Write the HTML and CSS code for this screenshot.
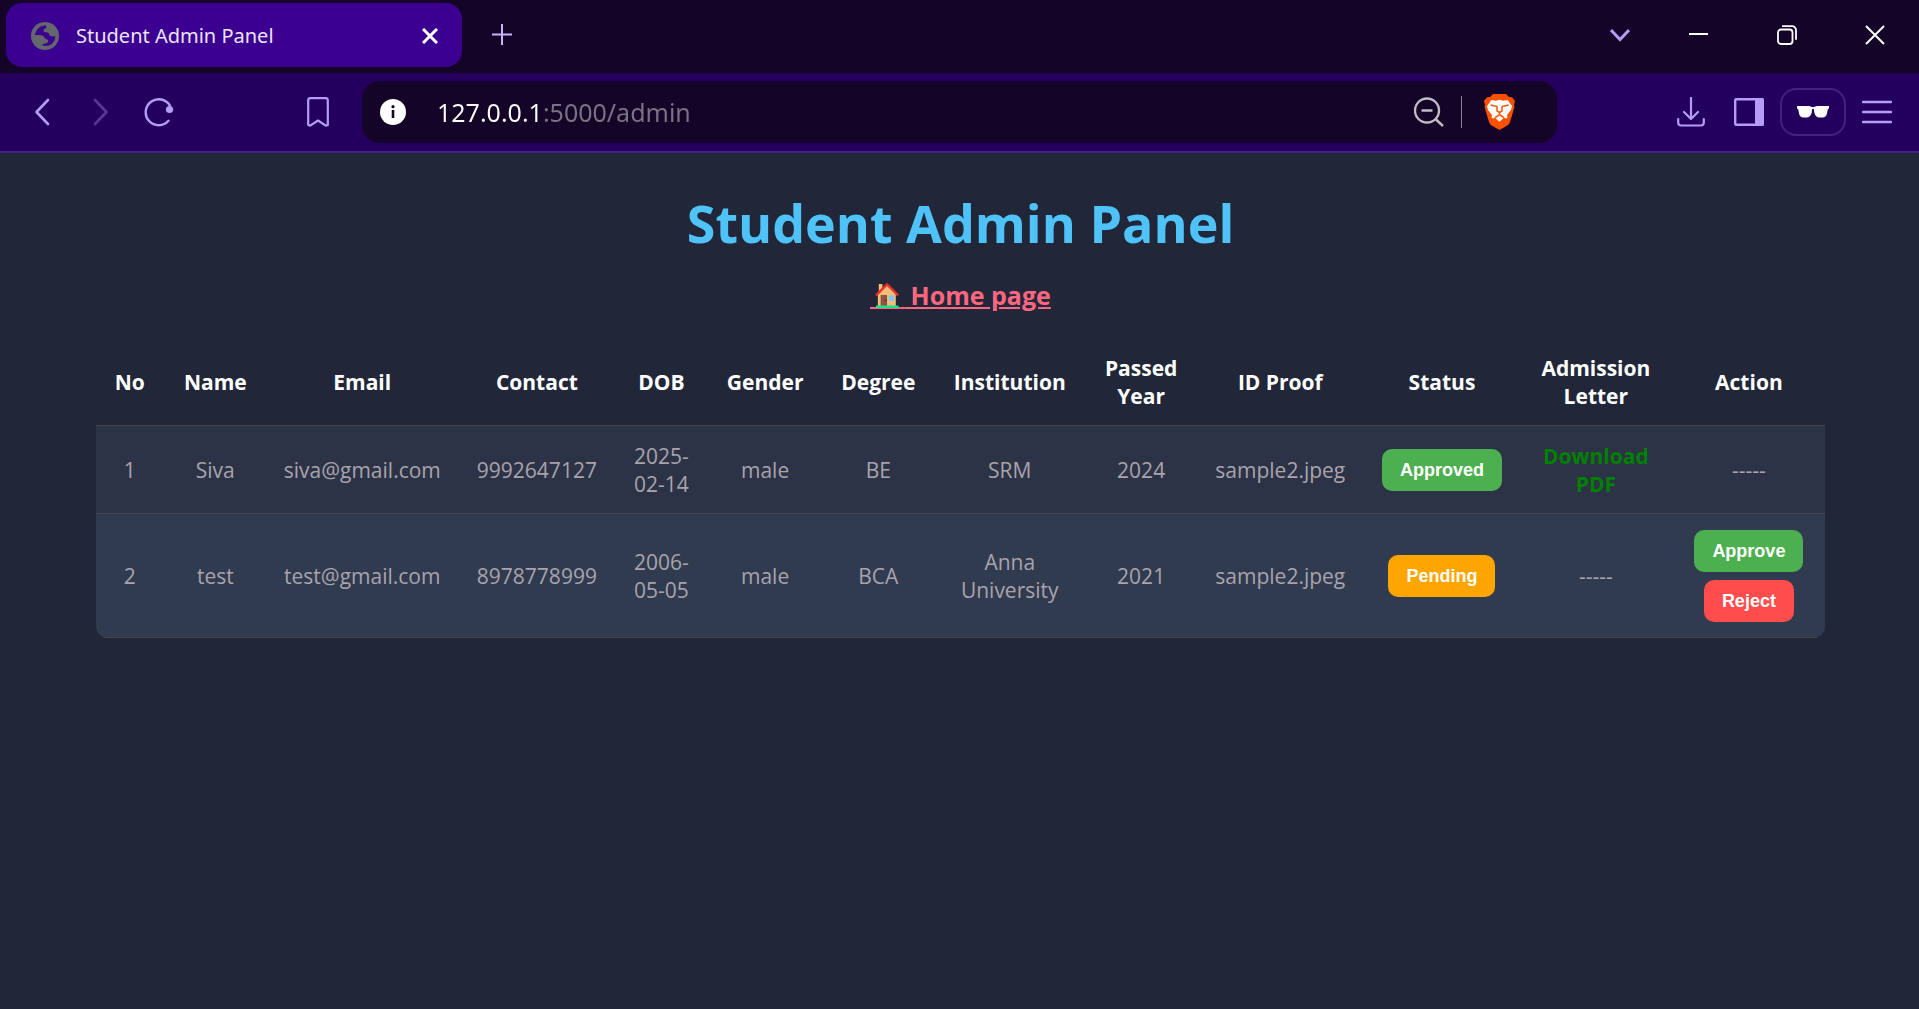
FILE: index.html
```html
<!DOCTYPE html>
<html lang="en">
<head>
<meta charset="utf-8">
<meta name="viewport" content="width=device-width, initial-scale=1">
<title>Student Admin Panel</title>
<link rel="stylesheet" href="styles.css">
</head>
<body>
<header class="browser">
  <div class="tab-strip">
    <div class="tab">
      <svg class="globe" width="28" height="28" viewBox="0 0 28 28" aria-hidden="true"><circle cx="14" cy="14" r="14" fill="#64686c"/><path d="M15 3.500C9 3 5 7.500 4 13c3 .2 6-.2 8 1 2 1.200 2 3.500 4 3.500 1.500.3 1.500 2 .5 3-1.500 1.500-4 .5-5.500 2.500 4 2.500 9 .5 11.500-3 1.500-2 1.800-4 1.800-6-1.800.3-3.800 1-5.300-.5-1.200-1.300-.6-2.500-2.500-3-2-.3-4 0-4-2s2.500-1.500 2.800-3z" fill="#3b0090"/></svg>
      <span class="tab-title">Student Admin Panel</span>
      <button class="icon-button" aria-label="Close tab"><svg width="16" height="16" viewBox="0 0 16 16" fill="none" stroke="#fff" stroke-width="3"><path d="M1 1l14 14M15 1L1 15"/></svg></button>
    </div>
    <button class="icon-button new-tab" aria-label="New tab"><svg width="22" height="22" viewBox="0 0 22 22" fill="none" stroke="#c6b4f4" stroke-width="2"><path d="M11 0v21M1 10.500h20"/></svg></button>
    <div class="window-controls">
      <button class="icon-button" aria-label="Search tabs"><svg width="20" height="14" viewBox="0 0 20 14" fill="none" stroke="#b39af8" stroke-width="3"><path d="M1 2l9 9.500L19 2"/></svg></button>
      <button class="icon-button" aria-label="Minimize"><svg width="20" height="20" viewBox="0 0 20 20" fill="none" stroke="#fff" stroke-width="2"><path d="M0 9h19"/></svg></button>
      <button class="icon-button" aria-label="Restore"><svg width="20" height="20" viewBox="0 0 20 20" fill="none" stroke="#fff" stroke-width="1.800"><rect x="1" y="4.500" width="14.500" height="14.500" rx="3"/><path d="M5 1.200h10a4 4 0 0 1 4 4v9.500"/></svg></button>
      <button class="icon-button" aria-label="Close"><svg width="20" height="20" viewBox="0 0 20 20" fill="none" stroke="#fff" stroke-width="2"><path d="M1 1l18 18M19 1L1 19"/></svg></button>
    </div>
  </div>
  <div class="toolbar">
    <div class="navigation">
      <button class="icon-button" aria-label="Back"><svg width="16" height="28" viewBox="0 0 16 28" fill="none" stroke="#b69cf9" stroke-width="2.600" stroke-linecap="round" stroke-linejoin="round"><path d="M14 2L2.500 14 14 26"/></svg></button>
      <button class="icon-button forward" aria-label="Forward"><svg width="16" height="28" viewBox="0 0 16 28" fill="none" stroke="#5e3596" stroke-width="2.600" stroke-linecap="round" stroke-linejoin="round"><path d="M2 2l11.500 12L2 26"/></svg></button>
      <button class="icon-button reload" aria-label="Reload"><svg width="30" height="30" viewBox="0 0 30 30" fill="none" stroke="#b69cf9" stroke-width="2.400" stroke-linecap="round"><path d="M24.500 23.800A13 13 0 1 1 26 8.800"/><circle cx="25.500" cy="12.500" r="3.600" fill="#b69cf9" stroke="none"/></svg></button>
      <button class="icon-button" aria-label="Bookmark"><svg width="22" height="30" viewBox="0 0 22 30" fill="none" stroke="#b69cf9" stroke-width="2.200" stroke-linejoin="round"><path d="M1.200 3.500A2.300 2.300 0 0 1 3.500 1.200h15a2.300 2.300 0 0 1 2.300 2.300V28l-2 .6L11 23.500 3.200 28.600l-2-.6z"/></svg></button>
    </div>
    <div class="address-bar">
      <svg class="info" width="26" height="26" viewBox="0 0 26 26" aria-hidden="true"><circle cx="13" cy="13" r="13" fill="#fff"/><path d="M13 11v8" stroke="#160427" stroke-width="2.600"/><circle cx="13" cy="7.700" r="1.600" fill="#160427"/></svg>
      <input class="address" type="text" aria-label="Address" value="127.0.0.1:5000/admin" spellcheck="false">
      <button class="icon-button" aria-label="Zoom out"><svg width="30" height="30" viewBox="0 0 30 30" fill="none" stroke="#c0bac2" stroke-width="2.400"><circle cx="13" cy="13.500" r="12"/><path d="M7.500 13.500h11M21.500 22l7.500 7"/></svg></button>
      <span class="divider"></span>
      <button class="icon-button" aria-label="Brave Shields"><svg width="31" height="36" viewBox="0 0 31 36"><path d="M9 0h13l3 3 3 .2L31 7l-1 4 .5 2-4.500 15c-.7 2-2 3-3.500 4L15.500 36 8.500 32C7 31 5.700 30 5 28L.5 13l.5-2L0 7l3-3.800L6 3z" fill="#ff5000"/><path d="M7.500 6l4.500.8 3.500-1 3.500 1 4.500-.8L28 12l-1 4-4 5 .5 2.500-1.500 1-4-1.800-2.500-1-2.500 1-4 1.800-1.500-1L8 21l-4-5-1-4z" fill="#fff"/><path d="M6.500 11l4 1 2.500.2M24.500 11l-4 1-2.500.2M13 12.200v4.600l2.500 1.800 2.500-1.800v-4.600M15.500 18.600v2M15.500 20.500l-4.500 3M15.500 20.500l4.500 3" fill="none" stroke="#ff5000" stroke-width="1.500"/><path d="M11.500 24.200l4-2.200 4 2.200-4 3.600z" fill="#fff"/></svg></button>
    </div>
    <div class="tools">
      <button class="icon-button" aria-label="Downloads"><svg width="28" height="30" viewBox="0 0 28 30" fill="none" stroke="#b69cf9" stroke-width="2.200" stroke-linecap="round" stroke-linejoin="round"><path d="M14 1v21M7 15l7 7 7-7M1.200 22v3.500a3 3 0 0 0 3 3h19.600a3 3 0 0 0 3-3V22"/></svg></button>
      <button class="icon-button" aria-label="Side panel"><svg width="30" height="28" viewBox="0 0 30 28"><rect x="1.200" y="1.200" width="27" height="25.600" rx="1" fill="none" stroke="#b69cf9" stroke-width="2.400"/><path d="M21 0h7.500A1.500 1.500 0 0 1 30 1.500v25a1.500 1.500 0 0 1-1.500 1.500H21z" fill="#b69cf9"/></svg></button>
      <button class="icon-button private" aria-label="Private window"><svg width="32" height="12" viewBox="0 0 32 12" fill="#fff"><path d="M0 0h12l4 1.200L20 0h12v2.500l-1.200.8-1 5c-.5 2-2 3.200-4 3.200h-3.300c-2.500 0-4.500-1.500-5.200-5L16.800 3h-1.600l-.5 3.500c-.7 3.500-2.700 5-5.200 5H6.200c-2 0-3.500-1.200-4-3.200l-1-5L0 2.500z"/></svg></button>
      <button class="icon-button" aria-label="Menu"><svg width="30" height="24" viewBox="0 0 30 24" fill="none" stroke="#b69cf9" stroke-width="2.400" stroke-linecap="round"><path d="M1 2h28M1 12h28M1 22h28"/></svg></button>
    </div>
  </div>
</header>
<main class="page">
  <h1>Student Admin Panel</h1>
  <a class="home-link" href="#"><svg class="house" width="34" height="28" viewBox="0 0 34 28" aria-hidden="true"><path d="M0 26h34v2H0z" fill="#ff6680"/><g transform="translate(.5 2) scale(.92)"><path d="M9 1h4v11H9zM8 12L18 2l9.500 10v13H8z" fill="#efbf78"/><path d="M6 13.500L18 1.500l12 12" fill="none" stroke="#ef2d2d" stroke-width="2.600"/><path d="M11 13h7v12h-7z" fill="#8c5543"/><circle cx="16.500" cy="19" r="1" fill="#5b3026"/><path d="M20 13.500h5.500v6H20z" fill="#82c8ff"/><path d="M6 24.500h24.500V27H6z" fill="#00ee8b"/></g></svg> Home page</a>
  <table class="students">
    <colgroup>
      <col class="col-no"><col class="col-name"><col class="col-email"><col class="col-contact"><col class="col-dob"><col class="col-gender"><col class="col-degree"><col class="col-institution"><col class="col-year"><col class="col-proof"><col class="col-status"><col class="col-letter"><col class="col-action">
    </colgroup>
    <thead>
      <tr><th>No</th><th>Name</th><th>Email</th><th>Contact</th><th>DOB</th><th>Gender</th><th>Degree</th><th>Institution</th><th>Passed Year</th><th>ID Proof</th><th>Status</th><th>Admission Letter</th><th>Action</th></tr>
    </thead>
    <tbody>
      <tr><td>1</td><td>Siva</td><td>siva@gmail.com</td><td>9992647127</td><td>2025-02-14</td><td>male</td><td>BE</td><td>SRM</td><td>2024</td><td>sample2.jpeg</td><td><button class="pill approve">Approved</button></td><td><a class="download" href="#">Download PDF</a></td><td>-----</td></tr>
      <tr><td>2</td><td>test</td><td>test@gmail.com</td><td>8978778999</td><td>2006-05-05</td><td>male</td><td>BCA</td><td>Anna University</td><td>2021</td><td>sample2.jpeg</td><td><button class="pill pending">Pending</button></td><td>-----</td><td><div class="actions"><button class="pill approve">Approve</button><button class="pill reject">Reject</button></div></td></tr>
    </tbody>
  </table>
</main>
</body>
</html>
```
FILE: styles.css
```css
* { box-sizing: border-box; }

body {
  margin: 0;
  min-height: 100vh;
  background: #212738;
  color: #a8a3ad;
  font: 21px/28px "Open Sans", "Noto Sans", sans-serif;
}

button, input { font: inherit; border: 0; padding: 0; }
svg { display: block; flex: none; }

.icon-button {
  display: flex;
  align-items: center;
  justify-content: center;
  background: none;
  cursor: pointer;
}

/* Browser window */
.tab-strip {
  display: flex;
  align-items: center;
  height: 73px;
  padding: 0 14px 3px 6px;
  background: #140427;
}

.tab {
  display: flex;
  align-items: center;
  gap: 17px;
  width: 456px;
  height: 64px;
  padding: 2px 24px 0 25px;
  border-radius: 16px;
  background: #3b0090;
}

.tab-title {
  flex: 1;
  color: #ece4fa;
  font-family: "Noto Sans", "Open Sans", sans-serif;
  font-size: 20px;
}

.new-tab { margin-left: 29px; }

.window-controls {
  display: flex;
  margin-left: auto;
}

.window-controls .icon-button { width: 88px; height: 40px; }
.window-controls .icon-button:first-child { width: 70px; }
.window-controls .icon-button:last-child { width: 60px; margin-left: 14px; }

.toolbar {
  display: flex;
  align-items: center;
  height: 80px;
  padding: 0 27px 0 34px;
  border-bottom: 2px solid #482080;
  background: #23005e;
}

.navigation {
  display: flex;
  align-items: center;
  width: 328px;
}

.forward { margin-left: 43px; }
.reload { margin: 0 133px 0 35px; }

.address-bar {
  display: flex;
  flex: 1;
  align-items: center;
  height: 62px;
  padding: 0 42px 0 18px;
  border-radius: 18px;
  background: #140427;
}

.address {
  flex: 1;
  min-width: 0;
  height: 40px;
  margin-left: 31px;
  outline: 0;
  background: linear-gradient(90deg, #fff 104px, #7c7286 104px);
  background-clip: text;
  color: transparent;
  font-family: "Noto Sans", "Open Sans", sans-serif;
  font-size: 25px;
}

.divider {
  width: 1px;
  height: 32px;
  margin: 0 22px 0 17px;
  background: #8b8191;
}

.tools {
  display: flex;
  align-items: center;
  margin-left: 120px;
}

.tools .icon-button + .icon-button { margin-left: 29px; }

.tools .private {
  width: 66px;
  height: 48px;
  border: 2px solid #45207d;
  border-radius: 16px;
}

.tools .icon-button.private { margin-left: 16px; }
.tools .private + .icon-button { margin-left: 16px; }

/* Admin page */
.page {
  display: flex;
  flex-direction: column;
  align-items: center;
  padding: 34px 94px 48px 96px;
}

h1 {
  margin: 0 0 18px;
  color: #4fc3f7;
  font-size: 52px;
  line-height: 72px;
}

.home-link {
  margin-bottom: 25px;
  color: #ff6680;
  font-size: 25px;
  font-weight: 700;
  line-height: 36px;
}

.house { display: inline-block; vertical-align: -4px; }

.students {
  width: 100%;
  border-spacing: 0;
  border-radius: 12px;
  overflow: hidden;
  table-layout: fixed;
  text-align: center;
}

.students th, .students td {
  padding: 16px 12px 15px;
  border-bottom: 1px solid #444649;
}

.students th { color: #fff; }
.students tbody tr { background: #2d3346; }
.students tbody tr:nth-child(even) { background: #313b4f; }
.students td:nth-child(3), .students td:nth-child(4) { white-space: nowrap; }
.students th:nth-child(9), .students td:nth-child(5) { padding-left: 16px; padding-right: 16px; }

.col-no { width: 3.9%; }
.col-name { width: 6%; }
.col-email { width: 11%; }
.col-contact { width: 9.2%; }
.col-dob { width: 5.2%; }
.col-gender { width: 6.8%; }
.col-degree { width: 6.3%; }
.col-institution { width: 8.9%; }
.col-year { width: 6.3%; }
.col-proof { width: 9.8%; }
.col-status { width: 8.9%; }
.col-letter { width: 8.9%; }
.col-action { width: 8.8%; }

.pill {
  height: 42px;
  padding: 0 18px;
  border-radius: 10px;
  color: #fff;
  font-family: "Liberation Sans", Arial, sans-serif;
  font-size: 18px;
  font-weight: 700;
  vertical-align: middle;
  cursor: pointer;
}

.approve { background: #4caf50; }
.pending { background: #ffa500; }
.reject { background: #ff4c4c; }

.actions {
  display: flex;
  flex-direction: column;
  align-items: center;
  gap: 8px;
}

.download {
  color: #008000;
  font-weight: 700;
  text-decoration: none;
}
```
